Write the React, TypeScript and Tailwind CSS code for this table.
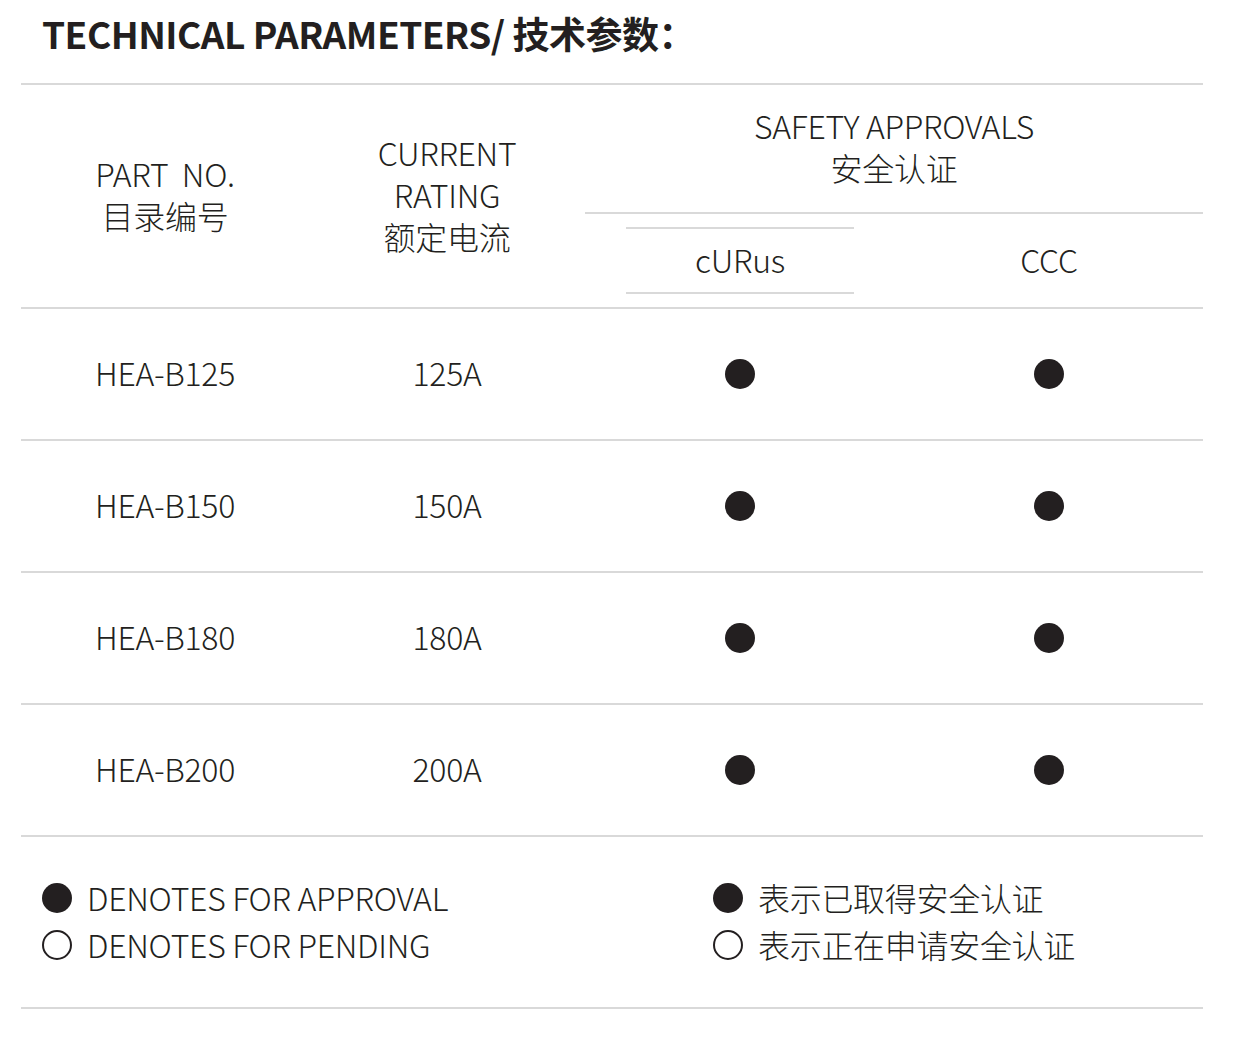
const rows = [
  { part: "HEA-B125", rating: "125A" },
  { part: "HEA-B150", rating: "150A" },
  { part: "HEA-B180", rating: "180A" },
  { part: "HEA-B200", rating: "200A" },
];

const font = "font-['Noto_Sans_CJK_SC','Noto_Sans',sans-serif]";

function Dot({ filled = true }: { filled?: boolean }) {
  return (
    <span
      className={
        filled
          ? "inline-block w-[30px] h-[30px] rounded-full bg-[#231f20]"
          : "inline-block w-[30px] h-[30px] rounded-full border-2 border-[#231f20] bg-white"
      }
    ></span>
  );
}

export default function App() {
  return (
    <div className={`min-h-screen bg-white text-[#231f20] ${font} pb-[52px]`}>
      {/* Title */}
      <h1 className="pl-[42px] pt-[9px] h-[83px] text-[37px] font-bold tracking-[-0.5px] leading-[48px]">
        TECHNICAL PARAMETERS/ 技术参数：
      </h1>

      <div className="mx-[21px] w-[1182px] border-t-2 border-[#d9d9d9]">
        {/* Header */}
        <div className="grid grid-cols-[288px_276px_310px_308px] grid-rows-[129px_93px] text-[32px] tracking-[-0.3px] font-light leading-[42px] text-center border-b-2 border-[#d9d9d9]">
          <div className="row-span-2 flex flex-col items-center justify-center pb-[5px]">
            <span>PART&nbsp; NO.</span>
            <span>目录编号</span>
          </div>
          <div className="row-span-2 flex flex-col items-center justify-center pb-[5px]">
            <span>CURRENT</span>
            <span>RATING</span>
            <span>额定电流</span>
          </div>
          <div className="col-span-2 flex flex-col items-center justify-center pb-[5px] border-b-2 border-[#d9d9d9]">
            <span>SAFETY APPROVALS</span>
            <span>安全认证</span>
          </div>
          <div className="flex items-center justify-center py-[13px] px-[41px]">
            <div className="w-full h-full flex items-center justify-center pb-[3px] border-y-2 border-[#d9d9d9]">
              cURus
            </div>
          </div>
          <div className="flex items-center justify-center pb-[3px]">CCC</div>
        </div>

        {/* Rows */}
        {rows.map((r) => (
          <div
            key={r.part}
            className="grid grid-cols-[288px_276px_310px_308px] h-[132px] items-center text-center text-[32px] tracking-[-0.3px] font-light leading-[40px] border-b-2 border-[#d9d9d9]"
          >
            <span className="pb-[5px]">{r.part}</span>
            <span className="pb-[5px]">{r.rating}</span>
            <span className="flex justify-center">
              <Dot />
            </span>
            <span className="flex justify-center">
              <Dot />
            </span>
          </div>
        ))}

        {/* Legend */}
        <div className="h-[172px] flex items-center pb-[2px] border-b-2 border-[#d9d9d9] text-[32px] tracking-[-0.3px] font-light leading-[47px]">
          <div className="w-[692px] pl-[21px] flex flex-col">
            <div className="flex items-center gap-[15px]">
              <Dot />
              <span>DENOTES FOR APPROVAL</span>
            </div>
            <div className="flex items-center gap-[15px]">
              <Dot filled={false} />
              <span>DENOTES FOR PENDING</span>
            </div>
          </div>
          <div className="flex flex-col">
            <div className="flex items-center gap-[15px]">
              <Dot />
              <span>表示已取得安全认证</span>
            </div>
            <div className="flex items-center gap-[15px]">
              <Dot filled={false} />
              <span>表示正在申请安全认证</span>
            </div>
          </div>
        </div>
      </div>
    </div>
  );
}
